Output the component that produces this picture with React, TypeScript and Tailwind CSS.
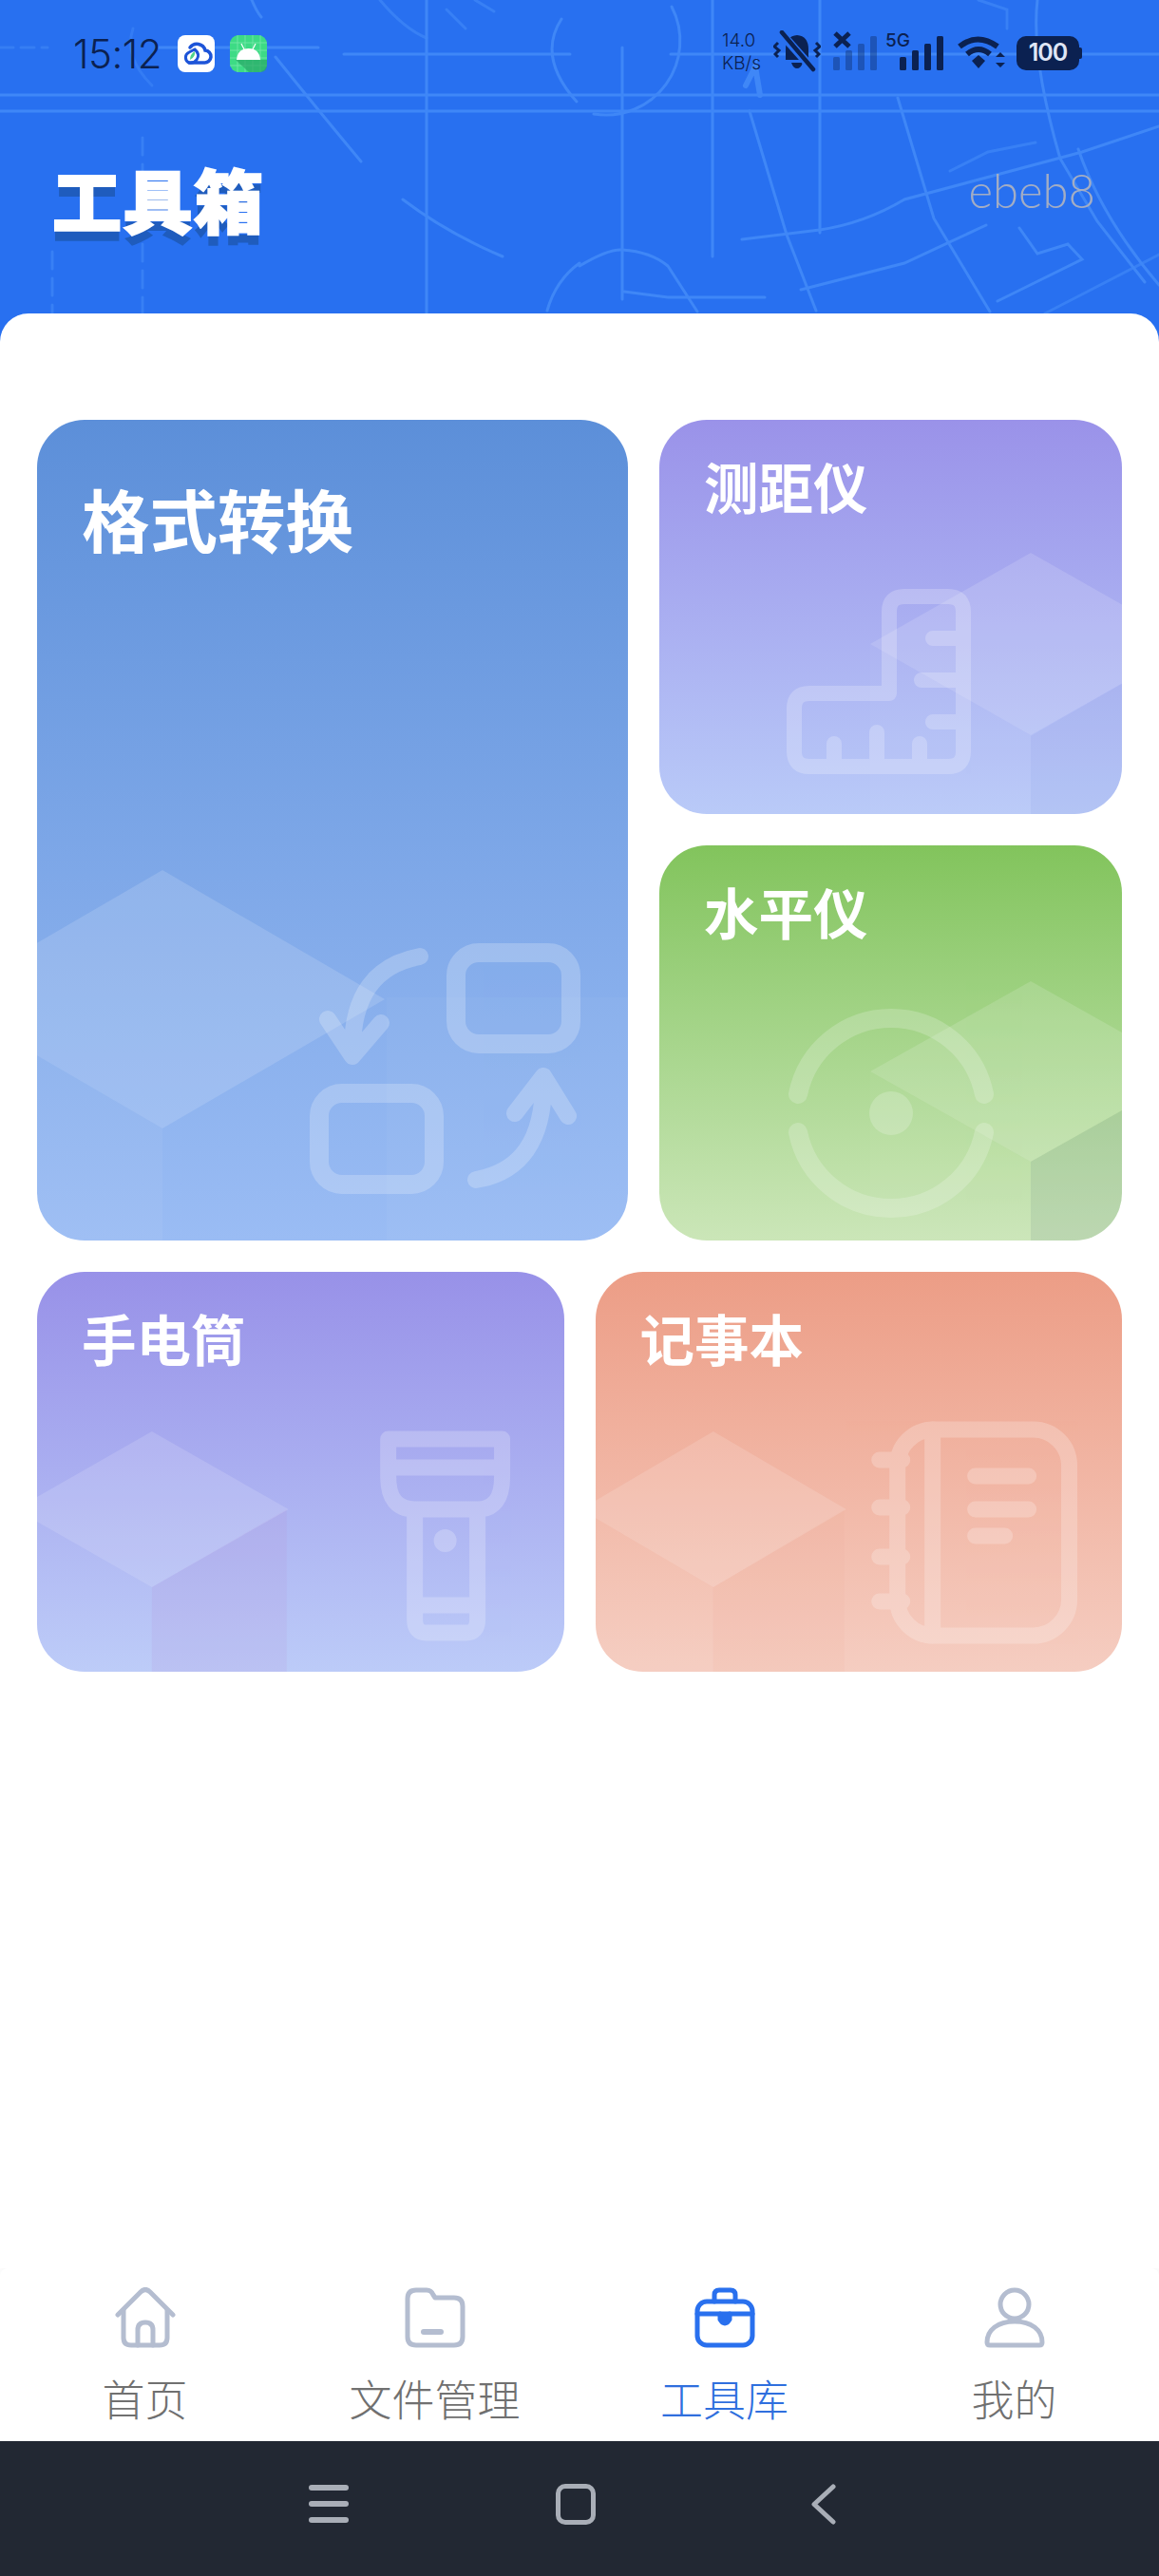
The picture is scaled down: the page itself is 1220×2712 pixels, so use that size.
const CJK = "font-['Noto_Sans_CJK_SC','Noto_Sans',sans-serif]";

function HeaderLines() {
  return (
    <svg className="absolute inset-0 h-[360px] w-[1220px]" viewBox="0 0 1220 360" fill="none" stroke="#3f87f7" strokeWidth="3" strokeLinecap="round">
      {/* blueprint sketch behind the title */}
      <path d="M0 100H1220M0 117H1220" />
      <path d="M0 50H50" strokeDasharray="14 8" opacity=".6" />
      <path d="M165 50H335M362 57H600M706 57H1220" />
      <path d="M449 0V330M863 0V245M655 50V315M750 0V270" />
      <path d="M150 145V330M55 265V330" strokeDasharray="18 10" opacity=".7" />
      <path d="M265 0Q270 12 275 18M290 60Q330 110 380 170M424 210Q470 245 529 270" />
      <path d="M400 0Q425 30 449 40M470 10L490 30M500 0L520 12" opacity=".7" />
      <path d="M591 20Q565 60 607 107M576 327Q585 295 610 277" />
      <path d="M707 7A78 78 0 0 1 625 120" />
      <path d="M140 30Q130 60 160 90" opacity=".5" />
      <path d="M789 117L828 247L859 327M945 103L983 230L1042 328M1092 0Q1085 60 1116 167L1155 233L1205 297M1135 157Q1160 230 1220 300" />
      <path d="M781 252L863 242Q910 235 952 210L1139 160L1220 133" />
      <path d="M843 305L952 277L1038 237M1073 240L1092 267L1124 257L1139 273L1050 317" />
      <path d="M610 280Q640 262 655 263Q685 265 703 280L734 328M657 307L703 313H805" />
      <path d="M1030 0L1060 10V30M1000 180L1040 160L1090 150" opacity=".7" />
      <path d="M1100 330L1220 268" opacity=".7" />
      <path d="M785 90L795 70L800 100" strokeWidth="6" />
    </svg>
  );
}

function SignalBars({ dim }: { dim?: boolean }) {
  return (
    <svg width="46" height="36" viewBox="0 0 46 36" fill="#0b2151" opacity={dim ? 0.35 : 1}>
      <rect x="0" y="22" width="7" height="14" rx="1.5" />
      <rect x="13" y="15" width="7" height="21" rx="1.5" />
      <rect x="26" y="8" width="7" height="28" rx="1.5" />
      <rect x="39" y="0" width="7" height="36" rx="1.5" />
    </svg>
  );
}

function StatusBar() {
  return (
    <div className="relative flex h-[76px] items-end pl-[77px] pr-[84px] text-[#0b2151]">
      <span className="font-['Inter',sans-serif] -mb-[6px] text-[42px] leading-[50px] font-light tracking-[-0.5px]">15:12</span>
      <svg className="ml-[17px]" width="39" height="39" viewBox="0 0 39 39">
        <rect width="39" height="39" rx="8" fill="#fff" />
        <path d="M12 29H28A6.5 6.5 0 0 0 29 16A9 9 0 0 0 13 13" fill="none" stroke="#1d54d8" strokeWidth="3.5" strokeLinecap="round" />
        <path d="M12 29A6 6 0 0 1 12 18L18 15Q24 20 20 26Q17 30 12 29Z" fill="none" stroke="#1d54d8" strokeWidth="3" />
        <path d="M13 26Q13 20 18 17Q19 23 13 26Z" fill="#4fd38a" />
      </svg>
      <svg className="ml-[16px]" width="39" height="39" viewBox="0 0 39 39">
        <rect width="39" height="39" rx="9" fill="#3ddb85" />
        <path d="M8 0V39M16 0V39M24 0V39M32 0V39M0 8H39M0 16H39M0 24H39M0 32H39" stroke="#78e8ab" strokeWidth=".8" />
        <path d="M6 26L20 39H32Q39 39 39 32V26Z" fill="#2aa866" opacity=".7" />
        <path d="M7 26Q8 14 19.500 14Q31 14 32 26Z" fill="#fff" />
        <path d="M12 9L15 15M27 9L24 15" stroke="#fff" strokeWidth="1.200" />
      </svg>
      <div className="ml-auto flex h-[39px] items-end">
        <div className="font-['Inter',sans-serif] -mb-[3px] text-[19px] leading-[24px] font-light">
          <div>14.0</div>
          <div>KB/s</div>
        </div>
        <svg className="ml-[13px]" width="50" height="44" viewBox="0 0 50 44" fill="#0b2151">
          <path d="M25 5Q37 6 37 20V31H13V20Q13 6 25 5ZM19 34H31Q29 40 25 40Q21 40 19 34Z" />
          <path d="M9 4L41 40" stroke="#2870f0" strokeWidth="9" />
          <path d="M9 2L42 41" stroke="#0b2151" strokeWidth="4.500" strokeLinecap="round" />
          <path d="M5 13L1 17L6 21L2 25L5 28M45 13L49 17L44 21L48 25L45 28" fill="none" stroke="#0b2151" strokeWidth="3" />
        </svg>
        <div className="relative ml-[13px] mb-[2px]">
          <SignalBars dim />
          <svg className="absolute -top-[5px] left-0" width="19" height="18" viewBox="0 0 19 18">
            <path d="M2 2L17 16M17 2L2 16" stroke="#0b2151" strokeWidth="5" />
          </svg>
        </div>
        <div className="relative ml-[24px] mb-[2px]">
          <SignalBars />
          <span className="font-['Inter',sans-serif] absolute -top-[6px] -left-[15px] text-[19px] leading-[22px] font-medium">5G</span>
        </div>
        <svg className="ml-[15px] mb-[2px]" width="50" height="36" viewBox="0 0 50 36" fill="none" stroke="#0b2151" strokeWidth="6">
          <path d="M2 11Q21 -4 42 11M10 19Q22 9 34 19" />
          <path d="M15 26L22 20L29 26L22 34Z" fill="#0b2151" stroke="none" />
          <path d="M40 22L45 17L50 22ZM40 28H50L45 33Z" fill="#0b2151" stroke="none" />
        </svg>
        <div className="relative ml-[12px] mb-[2px] flex h-[36px] w-[66px] items-center justify-center rounded-[10px] bg-[#0b2151] font-['Inter',sans-serif] text-[25px] font-semibold tracking-[-1px] text-[#dfe6f5]">
          100
          <span className="absolute top-[12px] -right-[3px] h-[12px] w-[3px] rounded-r-[2px] bg-[#0b2151]" />
        </div>
      </div>
    </div>
  );
}

function Cube({ apexX, apexY, halfW, halfH, bottom, side }: { apexX: number; apexY: number; halfW: number; halfH: number; bottom: number; side: number }) {
  const midY = apexY + halfH;
  const lowY = apexY + halfH * 2;
  return (
    <g>
      <path d={`M${apexX} ${lowY}L${apexX - halfW} ${midY}V${bottom}H${apexX}Z`} fill="#fff" opacity={side} />
      <path d={`M${apexX} ${apexY}L${apexX + halfW} ${midY}L${apexX} ${lowY}L${apexX - halfW} ${midY}Z`} fill="#fff" opacity=".14" />
    </g>
  );
}

type CardProps = { title: string; box: string; gradient: string; big?: boolean; height: string; children: React.ReactNode };

function Card({ title, box, gradient, big, height, children }: CardProps) {
  return (
    <div className={`relative overflow-hidden rounded-[50px] ${gradient} ${height}`}>
      <svg className="absolute inset-0 h-full w-full" viewBox={box} preserveAspectRatio="none">
        {children}
      </svg>
      <div
        className={
          big
            ? `${CJK} relative pt-[61px] pl-[47px] text-[71.500px] leading-[84px] font-bold text-white`
            : `${CJK} relative pt-[34px] pl-[47px] text-[57.500px] leading-[70px] font-bold text-white`
        }
      >
        {title}
      </div>
    </div>
  );
}

function Tools() {
  return (
    <div className="flex flex-col gap-[33px]">
      <div className="flex gap-[33px]">
        <div className="w-[622px]">
          <Card title="格式转换" big box="39 442 622 864" height="h-[864px]" gradient="bg-linear-to-b from-[#5c8fd9] to-[#9abcf4]">
            <Cube apexX={171} apexY={916} halfW={234} halfH={136} bottom={1306} side={0.05} />
            <rect x="407" y="1050" width="254" height="256" fill="#fff" opacity=".03" />
            <g fill="none" stroke="#fff" opacity=".22" strokeWidth="20" strokeLinecap="round" strokeLinejoin="round">
              <rect x="480" y="1003" width="121" height="96" rx="24" />
              <rect x="336" y="1151" width="121" height="96" rx="24" />
              <path d="M442 1007Q371 1020 371 1105M345 1073L371 1112L401 1077" strokeWidth="18" />
              <path d="M501 1242Q572 1230 572 1140M542 1172L572 1133L598 1175" strokeWidth="18" />
            </g>
          </Card>
        </div>
        <div className="flex w-[487px] flex-col gap-[33px]">
          <Card title="测距仪" box="694 442 487 415" height="h-[415px]" gradient="bg-linear-to-b from-[#9a92e9] to-[#b9caf8]">
            <path d="M1085 775L1254 678V857H1085Z" fill="#8f9fe0" opacity=".12" />
            <Cube apexX={1085} apexY={582} halfW={169} halfH={96} bottom={857} side={0.03} />
            <g fill="none" stroke="#fff" opacity=".22" strokeWidth="16" strokeLinecap="round" strokeLinejoin="round">
              <path d="M936 730V644Q936 628 952 628H998Q1014 628 1014 644V791Q1014 807 998 807H852Q836 807 836 791V746Q836 730 852 730Z" />
              <path d="M982 672H1014M970 716H1014M982 760H1014M878 783V807M923 771V807M968 783V807" />
            </g>
          </Card>
          <Card title="水平仪" box="694 890 487 416" height="h-[416px]" gradient="bg-linear-to-b from-[#82c45c] to-[#cbe6b8]">
            <path d="M1085 1223L1254 1128V1306H1085Z" fill="#8aa39a" opacity=".22" />
            <Cube apexX={1085} apexY={1033} halfW={169} halfH={95} bottom={1306} side={0.03} />
            <g fill="none" stroke="#fff" opacity=".2" strokeWidth="20" strokeLinecap="round">
              <path d="M840 1152A100 100 0 0 1 1036 1152" />
              <path d="M840 1192A100 100 0 0 0 1036 1192" />
              <circle cx="938" cy="1172" r="23" fill="#fff" stroke="none" />
            </g>
          </Card>
        </div>
      </div>
      <div className="grid grid-cols-2 gap-[33px]">
        <Card title="手电筒" box="39 1340 555 421" height="h-[421px]" gradient="bg-linear-to-b from-[#9891e8] to-[#bccbf8]">
          <path d="M160 1672L302 1590V1761H160Z" fill="#b98fd8" opacity=".14" />
          <Cube apexX={160} apexY={1508} halfW={144} halfH={82} bottom={1761} side={0.02} />
          <g fill="none" stroke="#fff" opacity=".22" strokeWidth="17" strokeLinejoin="round">
            <path d="M409 1516H529V1556Q529 1590 503 1590H437Q409 1590 409 1556Z" />
            <path d="M409 1546H529" />
            <path d="M437 1590V1706Q437 1720 449 1720H491Q503 1720 503 1706V1590" />
            <path d="M437 1691H503" />
            <circle cx="469" cy="1623" r="12" fill="#fff" stroke="none" />
          </g>
        </Card>
        <Card title="记事本" box="627 1340 555 421" height="h-[421px]" gradient="bg-linear-to-b from-[#ec9d86] to-[#f5cdc1]">
          <path d="M751 1672L889 1590V1761H751Z" fill="#e8a898" opacity=".1" />
          <Cube apexX={751} apexY={1508} halfW={140} halfH={82} bottom={1761} side={0.02} />
          <g fill="none" stroke="#fff" opacity=".22" strokeWidth="17" strokeLinecap="round">
            <rect x="945" y="1506" width="181" height="217" rx="38" />
            <path d="M982 1506V1723" />
            <path d="M926 1538H950M926 1588H950M926 1640H950M926 1687H950" />
            <path d="M1027 1555H1083M1027 1590H1083M1027 1618H1058" />
          </g>
        </Card>
      </div>
    </div>
  );
}

type NavItem = { label: string; active?: boolean; icon: React.ReactNode };

const navItems: NavItem[] = [
  {
    label: "首页",
    icon: (
      <>
        <path d="M3 29L27 5Q32 0 37 5L61 29" />
        <path d="M9 24V53Q9 61 17 61H47Q55 61 55 53V24" />
        <path d="M24 61V45Q24 37 32 37Q40 37 40 45V61" />
      </>
    ),
  },
  {
    label: "文件管理",
    icon: (
      <>
        <path d="M3 12Q3 3 12 3H23Q28 3 30 8L32 11H52Q61 11 61 20V52Q61 61 52 61H12Q3 61 3 52Z" />
        <path d="M20 47H38" strokeWidth="6" strokeLinecap="round" />
      </>
    ),
  },
  {
    label: "工具库",
    active: true,
    icon: (
      <>
        <rect x="3" y="15" width="58" height="46" rx="10" />
        <path d="M21 15V8Q21 3 26 3H38Q43 3 43 8V15" />
        <path d="M3 28H61" />
        <path d="M27 28V34Q32 42 37 34V28" fill="currentColor" />
      </>
    ),
  },
  {
    label: "我的",
    icon: (
      <>
        <circle cx="32" cy="18" r="15" />
        <path d="M6 61H58Q61 61 61 58C61 45 50 36 32 36C14 36 3 45 3 58Q3 61 6 61Z" />
      </>
    ),
  },
];

function BottomNav() {
  return (
    <div className="grid h-[182px] grid-cols-4 rounded-t-[8px] bg-white shadow-[0_-4px_10px_rgba(0,0,0,0.04)]">
      {navItems.map((item) => (
        <div key={item.label} className="flex flex-col items-center pt-[20px]">
          <svg
            width="64"
            height="64"
            viewBox="0 0 64 64"
            fill="none"
            stroke="currentColor"
            strokeWidth="5"
            strokeLinejoin="round"
            strokeLinecap="round"
            className={item.active ? "text-[#2970ee]" : "text-[#b4bdd0]"}
          >
            {item.icon}
          </svg>
          <span
            className={
              item.active
                ? `${CJK} mt-[25px] text-[45px] leading-[56px] font-light text-[#2f6fde]`
                : `${CJK} mt-[25px] text-[45px] leading-[56px] font-light text-[#707070]`
            }
          >
            {item.label}
          </span>
        </div>
      ))}
    </div>
  );
}

function SystemNav() {
  return (
    <div className="flex h-[142px] items-center justify-center bg-[#222833] pb-[10px] pr-[16px]">
      <svg width="42" height="40" viewBox="0 0 42 40" fill="#a9aeb7">
        <rect y="0" width="42" height="6" rx="3" />
        <rect y="17" width="42" height="6" rx="3" />
        <rect y="34" width="42" height="6" rx="3" />
      </svg>
      <div className="ml-[218px] h-[43px] w-[42px] rounded-[10px] border-[5px] border-[#a9aeb7]" />
      <svg className="ml-[227px]" width="26" height="43" viewBox="0 0 26 43" fill="none" stroke="#a9aeb7" strokeWidth="5" strokeLinecap="round" strokeLinejoin="round">
        <path d="M23 3L3 21.500L23 40" />
      </svg>
    </div>
  );
}

export default function App() {
  return (
    <div className="flex h-[2712px] w-[1220px] flex-col overflow-hidden bg-white">
      <div className="relative h-[360px] shrink-0 bg-[#2870f0]">
        <HeaderLines />
        <StatusBar />
        <div className="relative flex items-start justify-between pr-[67px] pl-[55px]">
          <div className={`${CJK} mt-[90px] text-[73px] leading-[84px] font-black tracking-[1.500px] text-white [-webkit-text-stroke:2px_#fff] [text-shadow:0_11px_0_#1f5cbd]`}>
            工具箱
          </div>
          <div className="mt-[94px] font-['Lato',sans-serif] text-[49px] leading-[60px] font-light text-[#a3adc4]">ebeb8</div>
        </div>
      </div>
      <div className="relative -mt-[30px] flex-1 rounded-t-[30px] bg-white px-[39px] pt-[112px]">
        <Tools />
      </div>
      <BottomNav />
      <SystemNav />
    </div>
  );
}
